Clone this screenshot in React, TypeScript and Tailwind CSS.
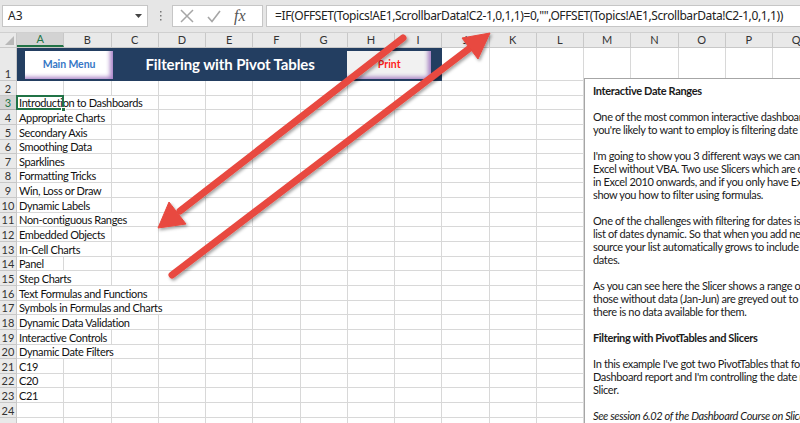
import React from "react";

const COLS = ["A","B","C","D","E","F","G","H","I","J","K","L","M","N","O","P","Q"];
const SPAN_W: Record<number, string> = {
  1: "w-[47.25px]",
  2: "w-[94.5px]",
  3: "w-[141.75px]",
  4: "w-[189px]",
};

const rows: [number, string, number][] = [
  [2, "", 0],
  [3, "Introduction to Dashboards", 3],
  [4, "Appropriate Charts", 2],
  [5, "Secondary Axis", 2],
  [6, "Smoothing Data", 2],
  [7, "Sparklines", 2],
  [8, "Formatting Tricks", 2],
  [9, "Win, Loss or Draw", 2],
  [10, "Dynamic Labels", 2],
  [11, "Non-contiguous Ranges", 3],
  [12, "Embedded Objects", 2],
  [13, "In-Cell Charts", 2],
  [14, "Panel", 1],
  [15, "Step Charts", 2],
  [16, "Text Formulas and Functions", 3],
  [17, "Symbols in Formulas and Charts", 4],
  [18, "Dynamic Data Validation", 3],
  [19, "Interactive Controls", 2],
  [20, "Dynamic Date Filters", 3],
  [21, "C19", 1],
  [22, "C20", 1],
  [23, "C21", 1],
  [24, "", 0],
  [25, "", 0],
];

const FONT = "font-['Lato','Open_Sans',sans-serif]";

function Cells({ count }: { count: number }) {
  return (
    <>
      {Array.from({ length: count }).map((_, i) => (
        <div key={i} className="w-[47.25px] shrink-0 h-full border-r border-b border-[#d8d8d8]" />
      ))}
    </>
  );
}

function GridRow({ n, text, span }: { n: number; text: string; span: number }) {
  const selected = n === 3;
  return (
    <div className="flex h-[14.65px] shrink-0">
      <div
        className={
          "w-[17px] shrink-0 h-full flex items-end justify-center text-[11px] leading-[13px] border-r border-b " +
          (selected
            ? "bg-[#d3d3d3] text-[#217346] border-[#ababab]"
            : "bg-[#e9e9e9] text-[#333] border-[#c8c8c8]")
        }
      >
        {n < 25 ? n : ""}
      </div>
      {span > 0 ? (
        <div
          className={
            SPAN_W[span] +
            " shrink-0 h-full border-r border-b border-[#d8d8d8] relative flex items-end pl-[2px] text-[11px] leading-[13px] tracking-[-0.35px] text-[#111] whitespace-nowrap"
          }
        >
          {selected && (
            <div className="absolute left-[-1px] top-[-1px] w-[48.25px] h-[15.65px] border-2 border-[#217346]">
              <div className="absolute right-[-4px] bottom-[-4px] w-[5px] h-[5px] bg-[#217346] border border-white" />
            </div>
          )}
          {text}
        </div>
      ) : null}
      <Cells count={17 - (span > 0 ? span : 0)} />
    </div>
  );
}

const panelLines: { t: string; s?: "b" | "i" }[] = [
  { t: "Interactive Date Ranges", s: "b" },
  { t: "" },
  { t: "One of the most common interactive dashboard tech" },
  { t: "you're likely to want to employ is filtering date ran" },
  { t: "" },
  { t: "I'm going to show you 3 different ways we can do th" },
  { t: "Excel without VBA. Two use Slicers which are only av" },
  { t: "in Excel 2010 onwards, and if you only have Excel 20" },
  { t: "show you how to filter using formulas." },
  { t: "" },
  { t: "One of the challenges with filtering for dates is mak" },
  { t: "list of dates dynamic. So that when you add new dat" },
  { t: "source your list automatically grows to include the" },
  { t: "dates." },
  { t: "" },
  { t: "As you can see here the Slicer shows a range of mon" },
  { t: "those without data (Jan-Jun) are greyed out to indic" },
  { t: "there is no data available for them." },
  { t: "" },
  { t: "Filtering with PivotTables and Slicers", s: "b" },
  { t: "" },
  { t: "In this example I've got two PivotTables that form m" },
  { t: "Dashboard report and I'm controlling the date range" },
  { t: "Slicer." },
  { t: "" },
  { t: "See session 6.02 of the Dashboard Course on Slicer", s: "i" },
];

export default function App() {
  return (
    <div className={"relative w-[800px] h-[423px] overflow-hidden bg-white " + FONT}>
      {/* Formula bar */}
      <div className="h-[33px] bg-[#e6e6e6] flex items-start pt-[5px] border-b border-[#d0d0d0]">
        <div className="ml-[2px] w-[146px] h-[22px] bg-white border border-[#c6c6c6] flex items-center justify-between pl-[5px] pr-[5px] text-[12px] text-[#222] font-['Noto_Sans','Open_Sans',sans-serif]">
          <span>A3</span>
          <svg width="7" height="4" viewBox="0 0 7 4"><path d="M0 0h7L3.5 4z" fill="#444" /></svg>
        </div>
        <div className="w-[24px] h-[22px] flex items-center justify-center">
          <svg width="3" height="10" viewBox="0 0 3 10">
            <rect x="1" y="0" width="1.5" height="1.5" fill="#777" />
            <rect x="1" y="4" width="1.5" height="1.5" fill="#777" />
            <rect x="1" y="8" width="1.5" height="1.5" fill="#777" />
          </svg>
        </div>
        <div className="w-[91px] h-[22px] bg-white border border-[#c6c6c6] flex items-center pl-[7px]">
          <svg width="14" height="14" viewBox="0 0 14 14" className="mr-[13px]">
            <path d="M1 1L13 13M13 1L1 13" stroke="#a6a6a6" strokeWidth="1.5" />
          </svg>
          <svg width="14" height="13" viewBox="0 0 14 13" className="mr-[13px]">
            <path d="M1 7L5 11.5L13 1" stroke="#a6a6a6" strokeWidth="1.6" fill="none" />
          </svg>
          <span className="font-['Liberation_Serif',serif] italic text-[16px] leading-[16px] text-[#555]">fx</span>
        </div>
        <div className="ml-[3px] flex-1 h-[22px] bg-white border border-[#c6c6c6] border-r-0 flex items-center pl-[8px] text-[12px] text-[#222] whitespace-nowrap font-['Noto_Sans','Open_Sans',sans-serif] tracking-[-0.4px]">
          =IF(OFFSET(Topics!AE1,ScrollbarData!C2-1,0,1,1)=0,"",OFFSET(Topics!AE1,ScrollbarData!C2-1,0,1,1))
        </div>
      </div>

      {/* Column headers */}
      <div className="flex h-[15px] bg-[#e9e9e9] border-b border-[#c8c8c8]">
        <div className="w-[17px] shrink-0 h-full border-r border-[#c8c8c8] relative">
          <svg width="9" height="9" viewBox="0 0 9 9" className="absolute right-[2px] bottom-[2px]">
            <path d="M9 0V9H0z" fill="#b8b8b8" />
          </svg>
        </div>
        {COLS.map((c, i) => (
          <div
            key={c}
            className={
              "w-[47.25px] shrink-0 h-full flex items-center justify-center text-[11px] border-r border-[#c8c8c8] " +
              (i === 0 ? "bg-[#d3d3d3] text-[#217346] border-b-2 border-b-[#217346]" : "text-[#333]")
            }
          >
            {c}
          </div>
        ))}
      </div>

      {/* Row 1 with banner */}
      <div className="flex h-[33px]">
        <div className="w-[17px] shrink-0 h-full flex items-end justify-center text-[11px] leading-[13px] bg-[#e9e9e9] text-[#333] border-r border-b border-[#c8c8c8]">
          1
        </div>
        <div className="w-[425.25px] shrink-0 h-full bg-[#233e61] flex items-center pl-[8px]">
          <div className="w-[88px] h-[28px] bg-white flex items-center justify-center text-[10.5px] tracking-[-0.1px] font-bold text-[#3677c6] shadow-[inset_-5px_-4px_4px_-2px_rgba(140,90,180,0.75)]">
            Main Menu
          </div>
          <div className="flex-1 text-center text-white font-bold text-[15px] tracking-[-0.1px]">
            Filtering with Pivot Tables
          </div>
          <div className="w-[84px] h-[28px] bg-[#f1f1f1] flex items-center justify-center text-[10.5px] font-bold text-[#ff1a1a] shadow-[inset_-5px_-4px_4px_-2px_rgba(140,90,180,0.75)] mr-[11px]">
            Print
          </div>
        </div>
        <Cells count={8} />
      </div>

      {rows.map(([n, t, s]) => (
        <GridRow key={n} n={n} text={t} span={s} />
      ))}

      {/* Text box shape */}
      <div className="absolute left-[584px] top-[78px] w-[260px] h-[360px] bg-white border border-[#a6a6a6] pl-[8px] pt-[5px] text-[11px] leading-[13px] tracking-[-0.35px] text-[#1a1a1a] whitespace-nowrap overflow-hidden">
        {panelLines.map((l, i) => (
          <div
            key={i}
            className={"h-[13px] " + (l.s === "b" ? "font-bold" : l.s === "i" ? "italic" : "")}
          >
            {l.t}
          </div>
        ))}
      </div>

      {/* Arrows */}
      <svg className="absolute left-0 top-0 pointer-events-none" width="800" height="423" viewBox="0 0 800 423">
        <defs>
          <filter id="sh" x="-10%" y="-10%" width="130%" height="130%">
            <feDropShadow dx="1.5" dy="2" stdDeviation="1.5" floodColor="#000" floodOpacity="0.35" />
          </filter>
        </defs>
        <g filter="url(#sh)" fill="#e8483f" stroke="#e8483f">
          <line x1="403" y1="38" x2="180" y2="211" strokeWidth="7" strokeLinecap="round" />
          <polygon points="158,228 186,224 169,202" strokeWidth="1" strokeLinejoin="round" />
          <line x1="172" y1="275" x2="470" y2="48" strokeWidth="7" strokeLinecap="round" />
          <polygon points="490,33 478,59 462,38" strokeWidth="1" strokeLinejoin="round" />
        </g>
      </svg>
    </div>
  );
}
